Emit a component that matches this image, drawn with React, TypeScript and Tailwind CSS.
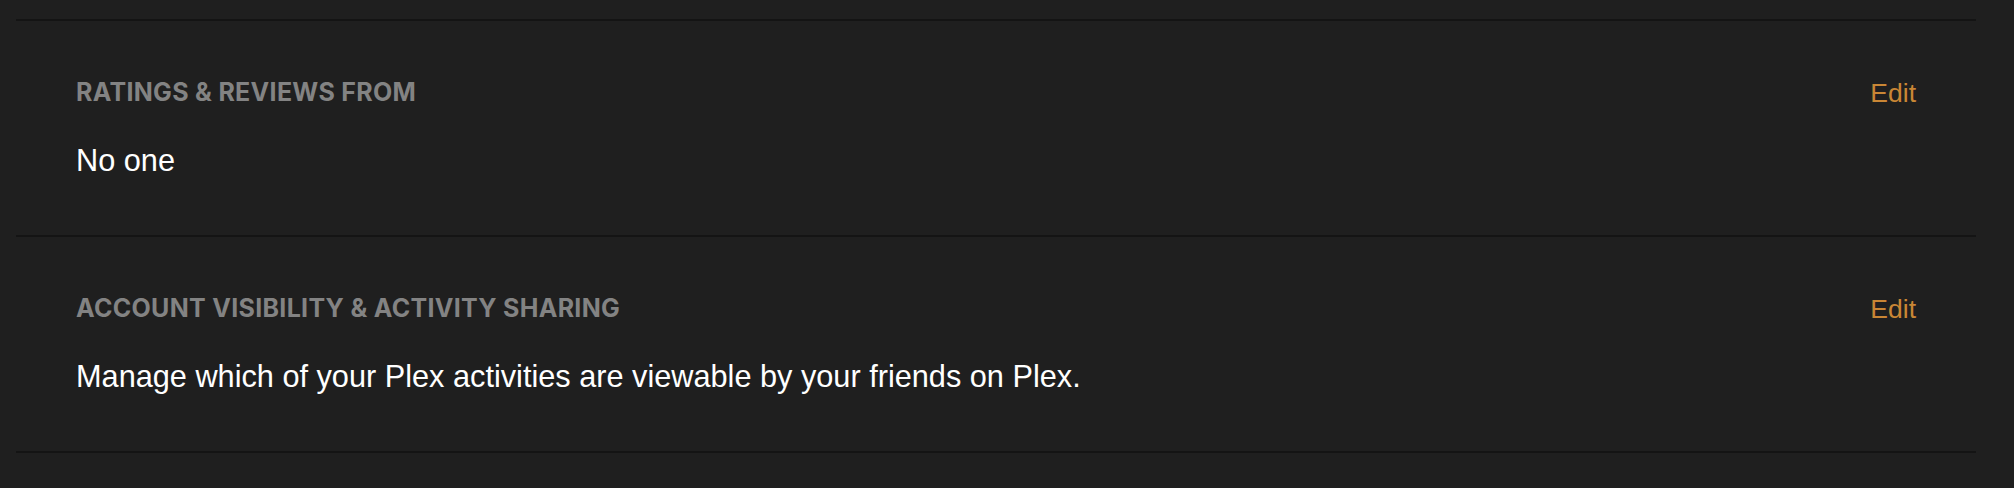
const rows = [
  {
    title: 'RATINGS & REVIEWS FROM',
    value: 'No one',
  },
  {
    title: 'ACCOUNT VISIBILITY & ACTIVITY SHARING',
    value: 'Manage which of your Plex activities are viewable by your friends on Plex.',
  },
]

function Divider() {
  return <div className="h-[2px] w-[1960px] bg-[#141414]" />
}

function SettingRow({ title, value }: { title: string; value: string }) {
  return (
    <div className="w-[1960px] px-[60px] pb-[57px] pt-[59px]">
      <div className="flex items-start justify-between">
        <h3 className="font-['Inter',sans-serif] text-[25px] font-bold leading-[24px] tracking-[0.3px] text-[#838383]">
          {title}
        </h3>
        <button
          type="button"
          className="font-['Liberation_Sans',Arial,sans-serif] text-[26.5px] leading-[26px] text-[#c98635]"
        >
          Edit
        </button>
      </div>
      <p className="mt-[38px] font-['Liberation_Sans',Arial,sans-serif] text-[30.7px] leading-[34px] text-white">
        {value}
      </p>
    </div>
  )
}

export default function App() {
  return (
    <div className="h-[488px] w-[2014px] overflow-hidden bg-[#1f1f1f] pl-4 pt-[19px]">
      <Divider />
      {rows.map((r) => (
        <div key={r.title}>
          <SettingRow title={r.title} value={r.value} />
          <Divider />
        </div>
      ))}
    </div>
  )
}
